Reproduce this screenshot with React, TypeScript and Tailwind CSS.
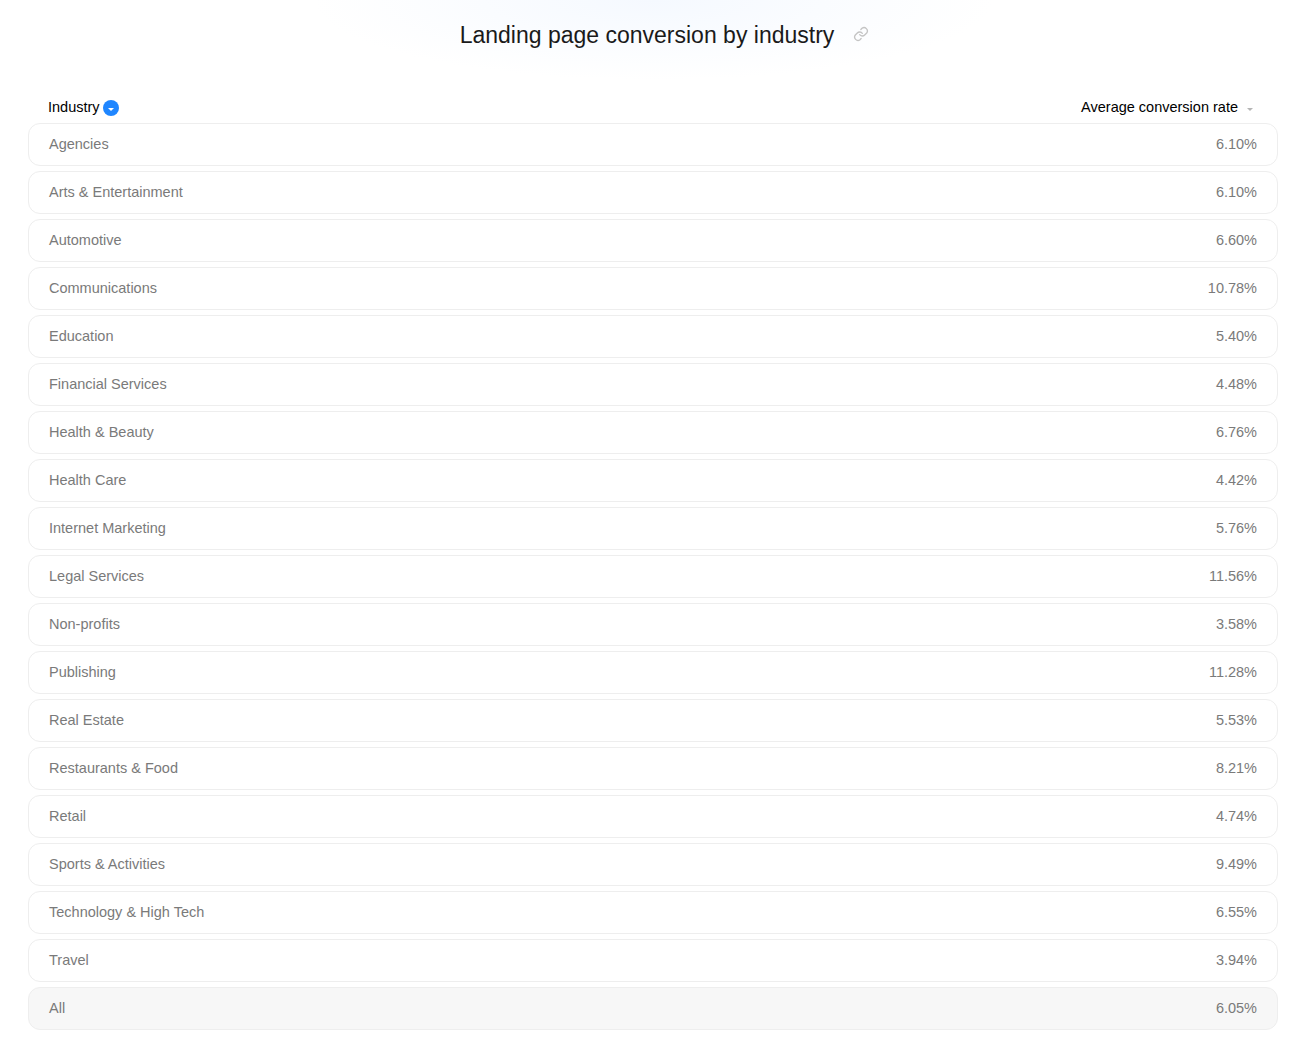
const rows = [
  { name: "Agencies", rate: "6.10%" },
  { name: "Arts & Entertainment", rate: "6.10%" },
  { name: "Automotive", rate: "6.60%" },
  { name: "Communications", rate: "10.78%" },
  { name: "Education", rate: "5.40%" },
  { name: "Financial Services", rate: "4.48%" },
  { name: "Health & Beauty", rate: "6.76%" },
  { name: "Health Care", rate: "4.42%" },
  { name: "Internet Marketing", rate: "5.76%" },
  { name: "Legal Services", rate: "11.56%" },
  { name: "Non-profits", rate: "3.58%" },
  { name: "Publishing", rate: "11.28%" },
  { name: "Real Estate", rate: "5.53%" },
  { name: "Restaurants & Food", rate: "8.21%" },
  { name: "Retail", rate: "4.74%" },
  { name: "Sports & Activities", rate: "9.49%" },
  { name: "Technology & High Tech", rate: "6.55%" },
  { name: "Travel", rate: "3.94%" },
  { name: "All", rate: "6.05%" },
];

function LinkIcon() {
  return (
    <svg width="16" height="16" viewBox="0 0 24 24" fill="none" stroke="#c4c4c4" strokeWidth="2" strokeLinecap="round" strokeLinejoin="round">
      <path d="M10 13a5 5 0 0 0 7.5.5l3-3a5 5 0 0 0-7-7l-1.7 1.7" />
      <path d="M14 11a5 5 0 0 0-7.5-.5l-3 3a5 5 0 0 0 7 7l1.7-1.7" />
    </svg>
  );
}

export default function App() {
  return (
    <div className="min-h-[1049px] bg-white font-['Liberation_Sans',Arial,sans-serif] bg-[radial-gradient(ellipse_340px_80px_at_50%_0px,#f5f9ff,#ffffff)] bg-no-repeat">
      <div className="flex h-[70px] items-center justify-center pl-[22px]">
        <h1 className="text-[23px] leading-[70px] text-[#1a1a1a]">Landing page conversion by industry</h1>
        <span className="ml-[19px] mt-[-2px]">
          <LinkIcon />
        </span>
      </div>
      <div className="pl-[28px] pr-[29px] pt-[27px]">
        <div className="flex h-[26px] items-center justify-between pb-[4px] pl-[20px] pr-[25px] text-[14.5px] text-black">
          <div className="flex items-center">
            <span>Industry</span>
            <span className="ml-[3px] flex h-[16px] w-[16px] items-center justify-center rounded-full bg-[#1f86ff]">
              <span className="mt-[3px] h-0 w-0 border-x-[3px] border-t-[3px] border-x-transparent border-t-white" />
            </span>
          </div>
          <div className="flex items-center">
            <span>Average conversion rate</span>
            <span className="ml-[9px] mt-[3px] h-0 w-0 border-x-[3px] border-t-[3px] border-x-transparent border-t-[#b5b5b5]" />
          </div>
        </div>
        <div className="flex flex-col gap-[5px]">
          {rows.map((row) => (
            <div
              key={row.name}
              className={`flex h-[43px] items-center justify-between rounded-[12px] border border-[#eeeeee] pl-[20px] pr-[20px] text-[14.5px] text-[#7a7a7a] ${row.name === "All" ? "bg-[#f7f7f7]" : "bg-white"}`}
            >
              <span>{row.name}</span>
              <span>{row.rate}</span>
            </div>
          ))}
        </div>
      </div>
    </div>
  );
}
